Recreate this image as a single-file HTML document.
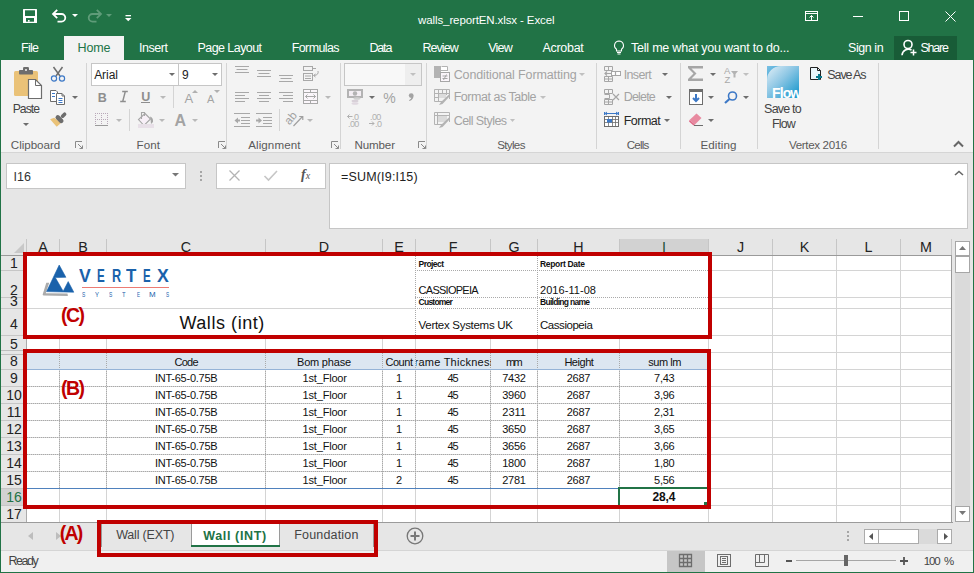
<!DOCTYPE html><html><head><meta charset="utf-8"><style>
*{margin:0;padding:0;box-sizing:border-box}
html,body{width:974px;height:573px;overflow:hidden;background:#e6e6e6;font-family:"Liberation Sans",sans-serif}
.a{position:absolute}
.t{white-space:nowrap;line-height:1}
svg{position:absolute;overflow:visible}
</style></head><body>
<div class="a" style="left:0px;top:0px;width:974px;height:60px;background:#217346"></div>
<svg style="left:23px;top:9px" width="14" height="14" viewBox="0 0 14 14"><rect x="0" y="0" width="14" height="14" rx="0.5" fill="#fff"/><rect x="2" y="1.3" width="10" height="5.7" fill="#217346"/><rect x="3" y="9" width="8" height="3.7" fill="#217346"/><rect x="5" y="11" width="1.6" height="1.7" fill="#fff"/></svg>
<svg style="left:51px;top:8px" width="17" height="15" viewBox="0 0 17 15"><path d="M2.5 6H10.5a3.8 3.8 0 0 1 0 7.6H6.5" fill="none" stroke="#fff" stroke-width="1.8"/><path d="M6.2 1.8L2 6L6.2 10.2" fill="none" stroke="#fff" stroke-width="1.8"/></svg>
<svg style="left:72px;top:14px" width="6" height="3" viewBox="0 0 6 3"><path d="M0 0H6L3 3Z" fill="#fff"/></svg>
<svg style="left:86px;top:8px" width="17" height="15" viewBox="0 0 17 15"><path d="M14.5 6H6.5a3.8 3.8 0 0 0 0 7.6H10.5" fill="none" stroke="#5f9c79" stroke-width="1.8"/><path d="M10.8 1.8L15 6L10.8 10.2" fill="none" stroke="#5f9c79" stroke-width="1.8"/></svg>
<svg style="left:106px;top:14px" width="6" height="3" viewBox="0 0 6 3"><path d="M0 0H6L3 3Z" fill="#5f9c79"/></svg>
<svg style="left:125px;top:15px" width="7" height="7" viewBox="0 0 7 7"><rect x="0.5" y="0" width="5.5" height="1.3" fill="#fff"/><path d="M0 3H6.5L3.25 6.3Z" fill="#fff"/></svg>
<div class="a t" style="left:418.10px;top:14.62px;font-size:11.5px;letter-spacing:-0.112px;color:#ffffff;">walls_reportEN.xlsx - Excel</div>
<svg style="left:805px;top:11px" width="14" height="10" viewBox="0 0 14 10"><rect x="0.5" y="0.5" width="12" height="9" fill="none" stroke="#fff"/><path d="M0.5 2.5H12.5" stroke="#fff"/><path d="M6.5 9V4.5M4.5 6.5L6.5 4.5L8.5 6.5" fill="none" stroke="#fff"/></svg>
<div class="a" style="left:853px;top:16px;width:10px;height:1px;background:#fff"></div>
<svg style="left:899px;top:11px" width="11" height="11" viewBox="0 0 11 11"><rect x="0.5" y="0.5" width="9" height="9" fill="none" stroke="#fff"/></svg>
<svg style="left:945px;top:11px" width="11" height="11" viewBox="0 0 11 11"><path d="M0.5 0.5L10.5 10.5M10.5 0.5L0.5 10.5" stroke="#fff"/></svg>
<div class="a" style="left:64px;top:36px;width:60px;height:24px;background:#f3f3f3"></div>
<div class="a t" style="left:77.50px;top:42.08px;font-size:12.5px;letter-spacing:-0.133px;color:#217346;">Home</div>
<div class="a t" style="left:21.00px;top:42.08px;font-size:12.5px;letter-spacing:-0.700px;color:#ffffff;">File</div>
<div class="a t" style="left:139.00px;top:42.08px;font-size:12.5px;letter-spacing:-0.460px;color:#ffffff;">Insert</div>
<div class="a t" style="left:197.50px;top:42.08px;font-size:12.5px;letter-spacing:-0.560px;color:#ffffff;">Page Layout</div>
<div class="a t" style="left:291.70px;top:42.08px;font-size:12.5px;letter-spacing:-0.600px;color:#ffffff;">Formulas</div>
<div class="a t" style="left:369.40px;top:42.08px;font-size:12.5px;letter-spacing:-1.133px;color:#ffffff;">Data</div>
<div class="a t" style="left:422.40px;top:42.08px;font-size:12.5px;letter-spacing:-0.920px;color:#ffffff;">Review</div>
<div class="a t" style="left:488.20px;top:42.08px;font-size:12.5px;letter-spacing:-0.733px;color:#ffffff;">View</div>
<div class="a t" style="left:542.40px;top:42.08px;font-size:12.5px;letter-spacing:-0.283px;color:#ffffff;">Acrobat</div>
<svg style="left:613px;top:40px" width="12" height="15" viewBox="0 0 12 15"><path d="M6 1a4.5 4.5 0 0 0-2.5 8.2V11h5V9.2A4.5 4.5 0 0 0 6 1z" fill="none" stroke="#fff" stroke-width="1.1"/><path d="M4 12.5h4M4.5 14h3" stroke="#fff" stroke-width="1"/></svg>
<div class="a t" style="left:631.00px;top:42.08px;font-size:12.5px;letter-spacing:-0.214px;color:#ffffff;">Tell me what you want to do...</div>
<div class="a t" style="left:848.00px;top:42.08px;font-size:12.5px;letter-spacing:-0.433px;color:#ffffff;">Sign in</div>
<div class="a" style="left:894px;top:36px;width:63px;height:24px;background:#185c37"></div>
<svg style="left:901px;top:39px" width="17" height="17" viewBox="0 0 17 17"><circle cx="7" cy="5.5" r="4" fill="none" stroke="#fff" stroke-width="1.6"/><path d="M1 16.2a6.5 6.5 0 0 1 9.5-5.2" fill="none" stroke="#fff" stroke-width="1.6"/><path d="M12.5 10.5v6M9.5 13.5h6" stroke="#fff" stroke-width="1.5"/></svg>
<div class="a t" style="left:920.40px;top:42.08px;font-size:12.5px;letter-spacing:-1.200px;color:#ffffff;">Share</div>
<div class="a" style="left:1px;top:60px;width:972px;height:93px;background:#f3f3f3"></div>
<div class="a" style="left:1px;top:152px;width:972px;height:1px;background:#d5d5d5"></div>
<div class="a" style="left:86px;top:63px;width:1px;height:86px;background:#d4d4d4"></div>
<div class="a" style="left:226px;top:63px;width:1px;height:86px;background:#d4d4d4"></div>
<div class="a" style="left:340px;top:63px;width:1px;height:86px;background:#d4d4d4"></div>
<div class="a" style="left:426px;top:63px;width:1px;height:86px;background:#d4d4d4"></div>
<div class="a" style="left:596px;top:63px;width:1px;height:86px;background:#d4d4d4"></div>
<div class="a" style="left:680px;top:63px;width:1px;height:86px;background:#d4d4d4"></div>
<div class="a" style="left:757px;top:63px;width:1px;height:86px;background:#d4d4d4"></div>
<div class="a" style="left:878px;top:63px;width:1px;height:86px;background:#d4d4d4"></div>
<div class="a t" style="left:10.80px;top:138.64px;font-size:11.6px;letter-spacing:-0.025px;color:#5a5a5a;">Clipboard</div>
<div class="a t" style="left:136.60px;top:138.64px;font-size:11.6px;letter-spacing:0.033px;color:#5a5a5a;">Font</div>
<div class="a t" style="left:248.20px;top:138.64px;font-size:11.6px;letter-spacing:0.088px;color:#5a5a5a;">Alignment</div>
<div class="a t" style="left:354.40px;top:138.64px;font-size:11.6px;letter-spacing:-0.120px;color:#5a5a5a;">Number</div>
<div class="a t" style="left:497.20px;top:138.64px;font-size:11.6px;letter-spacing:-0.660px;color:#5a5a5a;">Styles</div>
<div class="a t" style="left:626.70px;top:138.64px;font-size:11.6px;letter-spacing:-0.800px;color:#5a5a5a;">Cells</div>
<div class="a t" style="left:700.40px;top:138.64px;font-size:11.6px;letter-spacing:0.117px;color:#5a5a5a;">Editing</div>
<div class="a t" style="left:789.00px;top:138.64px;font-size:11.6px;letter-spacing:-0.360px;color:#5a5a5a;">Vertex 2016</div>
<svg style="left:75px;top:141px" width="8" height="8" viewBox="0 0 8 8"><path d="M0.5 7V0.5H7" fill="none" stroke="#8a8a8a"/><path d="M3 3L7.5 7.5M7.5 4.5V7.5H4.5" fill="none" stroke="#8a8a8a"/></svg>
<svg style="left:218px;top:141px" width="8" height="8" viewBox="0 0 8 8"><path d="M0.5 7V0.5H7" fill="none" stroke="#8a8a8a"/><path d="M3 3L7.5 7.5M7.5 4.5V7.5H4.5" fill="none" stroke="#8a8a8a"/></svg>
<svg style="left:331px;top:141px" width="8" height="8" viewBox="0 0 8 8"><path d="M0.5 7V0.5H7" fill="none" stroke="#8a8a8a"/><path d="M3 3L7.5 7.5M7.5 4.5V7.5H4.5" fill="none" stroke="#8a8a8a"/></svg>
<svg style="left:418px;top:141px" width="8" height="8" viewBox="0 0 8 8"><path d="M0.5 7V0.5H7" fill="none" stroke="#8a8a8a"/><path d="M3 3L7.5 7.5M7.5 4.5V7.5H4.5" fill="none" stroke="#8a8a8a"/></svg>
<svg style="left:953px;top:140px" width="11" height="8" viewBox="0 0 11 8"><path d="M1 6.5L5.5 2L10 6.5" fill="none" stroke="#666" stroke-width="2"/></svg>
<svg style="left:14px;top:66px" width="30" height="34" viewBox="0 0 30 34"><rect x="0" y="5" width="24" height="25" rx="1.5" fill="#eac278"/><rect x="5" y="4" width="14" height="4.5" rx="0.8" fill="#6d6d6d"/><rect x="9" y="1" width="6" height="4" rx="1.2" fill="#6d6d6d"/><circle cx="12" cy="4" r="1" fill="#f3f3f3"/><path d="M14.5 13.5H21.5L27.5 19.5V32.5H14.5Z" fill="#fff" stroke="#6d6d6d" stroke-width="1.2"/><path d="M21.5 13.5V19.5H27.5" fill="none" stroke="#6d6d6d" stroke-width="1"/></svg>
<div class="a t" style="left:12.70px;top:103.13px;font-size:12.2px;letter-spacing:-0.975px;color:#444;">Paste</div>
<svg style="left:23px;top:123px" width="6" height="3" viewBox="0 0 6 3"><path d="M0 0H6L3 3Z" fill="#6d6d6d"/></svg>
<svg style="left:50px;top:66px" width="16" height="16" viewBox="0 0 16 16"><path d="M3.5 1L10 10M12.5 1L6 10" stroke="#6d6d6d" stroke-width="1.5"/><circle cx="4" cy="12.5" r="2.6" fill="none" stroke="#3c78c6" stroke-width="1.2"/><circle cx="12" cy="12.5" r="2.6" fill="none" stroke="#3c78c6" stroke-width="1.2"/></svg>
<svg style="left:50px;top:90px" width="16" height="15" viewBox="0 0 16 15"><path d="M0.5 0.5H6L7.5 2V11.5H0.5Z" fill="#fff" stroke="#6d6d6d"/><path d="M6.5 3.5H12L14.5 6V14.5H6.5Z" fill="#fff" stroke="#6d6d6d"/><path d="M12 3.5V6H14.5" fill="none" stroke="#6d6d6d"/><path d="M2 3.5H5M2 6.5H5M8.5 8.5H12.5M8.5 10.5H12.5M8.5 12.5H12.5" stroke="#3c78c6"/></svg>
<svg style="left:72px;top:96px" width="6" height="3" viewBox="0 0 6 3"><path d="M0 0H6L3 3Z" fill="#6d6d6d"/></svg>
<svg style="left:40px;top:105px" width="30" height="25" viewBox="0 0 30 25"><path d="M10.1 14.2L14.2 12.7L21 17.9L16.7 21.7Z" fill="#eac278"/><path d="M17.8 12.4L21.2 15.8" stroke="#6d6d6d" stroke-width="4.6" stroke-linecap="round"/><path d="M22.6 11.2L24.6 9.2" stroke="#6d6d6d" stroke-width="3.6" stroke-linecap="round"/></svg>
<div class="a" style="left:91px;top:63px;width:88px;height:23px;background:#fff;border:1px solid #c6c6c6"></div>
<div class="a" style="left:178px;top:63px;width:44px;height:23px;background:#fff;border:1px solid #c6c6c6"></div>
<div class="a t" style="left:94.20px;top:69.00px;font-size:12px;letter-spacing:-0.075px;color:#222;">Arial</div>
<div class="a t" style="left:182.00px;top:69.00px;font-size:12px;letter-spacing:0.000px;color:#222;">9</div>
<svg style="left:169px;top:73px" width="6" height="3" viewBox="0 0 6 3"><path d="M0 0H6L3 3Z" fill="#6d6d6d"/></svg>
<svg style="left:212px;top:73px" width="6" height="3" viewBox="0 0 6 3"><path d="M0 0H6L3 3Z" fill="#6d6d6d"/></svg>
<div class="a t" style="left:97.80px;top:91.88px;font-size:12.5px;letter-spacing:0.000px;color:#8e8e8e;font-weight:bold;">B</div>
<svg style="left:119px;top:91px" width="10" height="11" viewBox="0 0 10 11"><path d="M3.2 0.5H8.8M1.2 10.5H6.8M6.3 0.5L3.7 10.5" stroke="#8e8e8e" stroke-width="1.4" fill="none"/></svg>
<div class="a t" style="left:141.30px;top:91.38px;font-size:12.5px;letter-spacing:0.000px;color:#8e8e8e;font-weight:bold;">U</div>
<div class="a" style="left:141px;top:102px;width:9px;height:1px;background:#8e8e8e"></div>
<svg style="left:160px;top:96px" width="6" height="3" viewBox="0 0 6 3"><path d="M0 0H6L3 3Z" fill="#b9b9b9"/></svg>
<div class="a" style="left:173px;top:86px;width:1px;height:22px;background:#d4d4d4"></div>
<div class="a t" style="left:184.50px;top:92.45px;font-size:13px;letter-spacing:0.000px;color:#a3a3a3;">A</div>
<svg style="left:192px;top:90px" width="6" height="3" viewBox="0 0 6 3"><path d="M0 3H6L3 0Z" fill="#b0b0b0"/></svg>
<div class="a t" style="left:207.00px;top:94.15px;font-size:11px;letter-spacing:0.000px;color:#a3a3a3;">A</div>
<svg style="left:214px;top:90px" width="6" height="3" viewBox="0 0 6 3"><path d="M0 0H6L3 3Z" fill="#b0b0b0"/></svg>
<svg style="left:95px;top:113px" width="13" height="13" viewBox="0 0 13 13"><path d="M0 0.5H13M0 6.5H13M0.5 0V12M6.5 0V12M12.5 0V12" stroke="#b8a8b8" stroke-dasharray="1 1"/><path d="M0 12.5H13" stroke="#9a9a9a"/></svg>
<svg style="left:116px;top:119px" width="6" height="3" viewBox="0 0 6 3"><path d="M0 0H6L3 3Z" fill="#b9b9b9"/></svg>
<div class="a" style="left:129px;top:109px;width:1px;height:22px;background:#d4d4d4"></div>
<svg style="left:138px;top:111px" width="17" height="18" viewBox="0 0 17 18"><path d="M7 2.5L12.5 8L6 14.5L0.5 8.5Z" fill="#f8f0f8" stroke="#a6a6a6" stroke-width="1.1"/><path d="M3.5 8V1.5H6.5V5" fill="none" stroke="#a6a6a6" stroke-width="1.1"/><path d="M12 5.5Q15.5 6.5 15 11L13 13L12.5 8Z" fill="#a6a6a6"/><rect x="0" y="13" width="16" height="4" fill="#e8e0e8"/></svg>
<svg style="left:159px;top:119px" width="6" height="3" viewBox="0 0 6 3"><path d="M0 0H6L3 3Z" fill="#b9b9b9"/></svg>
<div class="a t" style="left:174.40px;top:112.50px;font-size:16px;letter-spacing:0.000px;color:#a3a3a3;font-weight:bold;">A</div>
<svg style="left:192px;top:119px" width="6" height="3" viewBox="0 0 6 3"><path d="M0 0H6L3 3Z" fill="#b9b9b9"/></svg>
<svg style="left:235px;top:66px" width="16" height="14" viewBox="0 0 16 14"><path d="M0 0.5H14" stroke="#a8a8a8"/><path d="M1.5 3.5H12.5" stroke="#a8a8a8"/><path d="M0 6.5H14" stroke="#a8a8a8"/></svg>
<svg style="left:257px;top:70px" width="16" height="14" viewBox="0 0 16 14"><path d="M0 0.5H14" stroke="#a8a8a8"/><path d="M1.5 3.5H12.5" stroke="#a8a8a8"/><path d="M0 6.5H14" stroke="#a8a8a8"/></svg>
<svg style="left:279px;top:75px" width="16" height="14" viewBox="0 0 16 14"><path d="M0 0.5H14" stroke="#a8a8a8"/><path d="M1.5 3.5H12.5" stroke="#a8a8a8"/><path d="M0 6.5H14" stroke="#a8a8a8"/></svg>
<svg style="left:235px;top:92px" width="16" height="14" viewBox="0 0 16 14"><path d="M0 0.5H14" stroke="#a8a8a8"/><path d="M0 3.5H10" stroke="#a8a8a8"/><path d="M0 6.5H14" stroke="#a8a8a8"/><path d="M0 9.5H10" stroke="#a8a8a8"/></svg>
<svg style="left:257px;top:92px" width="16" height="14" viewBox="0 0 16 14"><path d="M0 0.5H14" stroke="#a8a8a8"/><path d="M2 3.5H12" stroke="#a8a8a8"/><path d="M0 6.5H14" stroke="#a8a8a8"/><path d="M2 9.5H12" stroke="#a8a8a8"/></svg>
<svg style="left:279px;top:92px" width="16" height="14" viewBox="0 0 16 14"><path d="M0 0.5H14" stroke="#a8a8a8"/><path d="M4 3.5H14" stroke="#a8a8a8"/><path d="M0 6.5H14" stroke="#a8a8a8"/><path d="M4 9.5H14" stroke="#a8a8a8"/></svg>
<svg style="left:303px;top:66px" width="17" height="15" viewBox="0 0 17 15"><rect x="0.5" y="0.5" width="9" height="4" fill="none" stroke="#a8a8a8"/><path d="M9.5 2.5H13" stroke="#a8a8a8"/><rect x="0.5" y="7.5" width="9" height="7" fill="none" stroke="#a8a8a8"/><path d="M2 10H8M2 12.5H8" stroke="#a8a8a8"/><path d="M15 5Q16 9 11 9.5M12.5 8L10.5 9.5L12.5 11" fill="none" stroke="#a8a8a8"/></svg>
<svg style="left:303px;top:89px" width="16" height="15" viewBox="0 0 16 15"><rect x="0.5" y="0.5" width="14" height="14" fill="#fbf6fb" stroke="#a8a8a8"/><path d="M0.5 3.5H14.5M0.5 11.5H14.5M7.5 0.5V3.5M7.5 11.5V14.5M2.5 7.5H12.5M4.5 5.5L2.5 7.5L4.5 9.5M10.5 5.5L12.5 7.5L10.5 9.5" fill="none" stroke="#a8a8a8"/></svg>
<svg style="left:325px;top:96px" width="6" height="3" viewBox="0 0 6 3"><path d="M0 0H6L3 3Z" fill="#b9b9b9"/></svg>
<svg style="left:234px;top:113px" width="17" height="14" viewBox="0 0 17 14"><path d="M0 0.5H16M7 4.5H16M7 7.5H16M7 10.5H16M0 13.5H16" stroke="#a8a8a8"/><path d="M2 7.5H6" stroke="#a8a8a8" stroke-width="2"/><path d="M4 4.5L0.5 7.5L4 10.5Z" fill="#a8a8a8"/></svg>
<svg style="left:256px;top:113px" width="17" height="14" viewBox="0 0 17 14"><path d="M0 0.5H16M7 4.5H16M7 7.5H16M7 10.5H16M0 13.5H16" stroke="#a8a8a8"/><path d="M0 7.5H4" stroke="#a8a8a8" stroke-width="2"/><path d="M2.5 4.5L6 7.5L2.5 10.5Z" fill="#a8a8a8"/></svg>
<div class="a" style="left:279px;top:109px;width:1px;height:22px;background:#d4d4d4"></div>
<svg style="left:284px;top:110px" width="22" height="18" viewBox="0 0 22 18"><text x="0" y="0" font-size="11.5" fill="#a0a0a0" font-family="Liberation Sans" transform="translate(5.5 15.5) rotate(-50)">ab</text><path d="M9.5 16L18.5 6.5M15.2 6.5H18.8V10" fill="none" stroke="#a0a0a0" stroke-width="1.2"/></svg>
<svg style="left:307px;top:119px" width="6" height="3" viewBox="0 0 6 3"><path d="M0 0H6L3 3Z" fill="#b9b9b9"/></svg>
<div class="a" style="left:344px;top:63px;width:78px;height:23px;background:#f8f8f8;border:1px solid #c6c6c6"></div>
<div class="a" style="left:405px;top:64px;width:16px;height:21px;background:#eeeeee"></div>
<svg style="left:410px;top:73px" width="6" height="3" viewBox="0 0 6 3"><path d="M0 0H6L3 3Z" fill="#c0c0c0"/></svg>
<svg style="left:347px;top:89px" width="16" height="16" viewBox="0 0 16 16"><rect x="0" y="0" width="16" height="9" fill="#b3b3b3"/><rect x="2" y="2" width="12" height="5" fill="#f3eef3"/><circle cx="8" cy="4.5" r="2.2" fill="#b3b3b3"/><ellipse cx="10" cy="9.5" rx="3.5" ry="1.3" fill="#d0d0d0"/><ellipse cx="8" cy="12" rx="3.5" ry="1.3" fill="#d8d0d8"/><ellipse cx="8" cy="14.5" rx="3.5" ry="1.3" fill="#e0d8e0"/></svg>
<svg style="left:369px;top:96px" width="6" height="3" viewBox="0 0 6 3"><path d="M0 0H6L3 3Z" fill="#6d6d6d"/></svg>
<div class="a t" style="left:383.30px;top:91.30px;font-size:14px;letter-spacing:0.000px;color:#a3a3a3;">%</div>
<svg style="left:407px;top:93px" width="7" height="8" viewBox="0 0 7 8"><circle cx="4.2" cy="2.6" r="2.4" fill="#a3a3a3"/><path d="M6.4 3Q6.5 6.5 2.5 8L2 7.3Q4.5 6 4.6 4Z" fill="#a3a3a3"/></svg>
<svg style="left:345px;top:111px" width="42" height="17" viewBox="0 0 42 17"><g font-family="Liberation Sans" font-size="9" fill="#b0b0b0"><text x="7" y="8.5" letter-spacing="-0.6">.0</text><text x="3" y="15.5" letter-spacing="-0.6">.00</text><text x="25" y="8.5" letter-spacing="-0.6">.00</text><text x="30" y="15.5" letter-spacing="-0.6">.0</text></g><path d="M7.5 5.5H2.5M4.5 3.5L2.5 5.5L4.5 7.5M24 12.5H29M27 10.5L29 12.5L27 14.5" fill="none" stroke="#b0b0b0" stroke-width="1"/></svg>
<svg style="left:434px;top:66px" width="16" height="16" viewBox="0 0 16 16"><rect x="0" y="0" width="14" height="12" fill="#fff"/><rect x="0" y="0" width="7" height="12" fill="#b3b3b3"/><path d="M7.5 0.5H13.5V4.5H7.5M0 4.5H14M0 8.5H7" fill="none" stroke="#b3b3b3"/><rect x="6.5" y="6.5" width="9" height="9" fill="#faf5fa" stroke="#a6a6a6"/><path d="M8.5 10H13.5M8.5 12.5H13.5M12.5 8.5L9.5 14" stroke="#a6a6a6"/></svg>
<div class="a t" style="left:453.70px;top:68.58px;font-size:12.5px;letter-spacing:-0.133px;color:#a3a3a3;">Conditional Formatting</div>
<svg style="left:579px;top:73px" width="6" height="3" viewBox="0 0 6 3"><path d="M0 0H6L3 3Z" fill="#c0c0c0"/></svg>
<svg style="left:434px;top:89px" width="16" height="16" viewBox="0 0 16 16"><path d="M0.5 0.5H15.5V10M0.5 0.5V12.5H9M0.5 4.5H15M0.5 8.5H10M4.5 0.5V12.5M8.5 0.5V9M12.5 0.5V6" fill="none" stroke="#b3b3b3"/><rect x="5" y="5" width="7" height="4" fill="#dcdcdc"/><path d="M15.5 5L7 13L5 16L8.5 15L16 7Z" fill="#b3b3b3"/></svg>
<div class="a t" style="left:453.70px;top:91.47px;font-size:12.5px;letter-spacing:-0.471px;color:#a3a3a3;">Format as Table</div>
<svg style="left:540px;top:96px" width="6" height="3" viewBox="0 0 6 3"><path d="M0 0H6L3 3Z" fill="#c0c0c0"/></svg>
<svg style="left:434px;top:112px" width="16" height="16" viewBox="0 0 16 16"><path d="M0.5 0.5H15.5V10M0.5 0.5V12.5H9M0.5 3.5H15M3.5 0.5V12.5" fill="none" stroke="#b3b3b3"/><rect x="4" y="4" width="9" height="6" fill="#dadada"/><path d="M15.5 5L7 13L5 16L8.5 15L16 7Z" fill="#b3b3b3"/></svg>
<div class="a t" style="left:453.70px;top:114.58px;font-size:12.5px;letter-spacing:-0.570px;color:#a3a3a3;">Cell Styles</div>
<svg style="left:510px;top:119px" width="5" height="3" viewBox="0 0 5 3"><path d="M0 0H5L2.5 3Z" fill="#c0c0c0"/></svg>
<svg style="left:604px;top:66px" width="17" height="16" viewBox="0 0 17 16"><path d="M0.5 0.5H8.5V4.5H0.5ZM0.5 10.5H8.5V15.5H0.5ZM4.5 0.5V4.5M4.5 10.5V15.5M0.5 13H8.5" fill="none" stroke="#a6a6a6"/><rect x="7.5" y="5.5" width="9" height="4" fill="#fff" stroke="#a6a6a6"/><path d="M11.5 5.5V9.5M1 7.5H7M3 5.5L1 7.5L3 9.5" fill="none" stroke="#a6a6a6" stroke-width="1.2"/></svg>
<div class="a t" style="left:623.70px;top:68.58px;font-size:12.5px;letter-spacing:-0.640px;color:#a3a3a3;">Insert</div>
<svg style="left:662px;top:73px" width="6" height="3" viewBox="0 0 6 3"><path d="M0 0H6L3 3Z" fill="#6d6d6d"/></svg>
<svg style="left:604px;top:89px" width="17" height="16" viewBox="0 0 17 16"><path d="M0.5 0.5H8.5V4.5H0.5ZM0.5 10.5H8.5V15.5H0.5ZM4.5 0.5V4.5M4.5 10.5V15.5M0.5 13H8.5M0.5 5.5H5.5V9.5H0.5" fill="none" stroke="#a6a6a6"/><path d="M9 5L15 11M15 5L9 11" stroke="#a6a6a6" stroke-width="1.2"/></svg>
<div class="a t" style="left:623.70px;top:91.47px;font-size:12.5px;letter-spacing:-0.800px;color:#a3a3a3;">Delete</div>
<svg style="left:666px;top:96px" width="6" height="3" viewBox="0 0 6 3"><path d="M0 0H6L3 3Z" fill="#6d6d6d"/></svg>
<svg style="left:604px;top:112px" width="16" height="16" viewBox="0 0 16 16"><path d="M0.5 0V3M14.5 0V3M1.5 1.5H13.5M3 0L1 1.5L3 3M12 0L14 1.5L12 3" fill="none" stroke="#3c78c6" stroke-width="1"/><rect x="0.5" y="4.5" width="14" height="10" fill="#fff" stroke="#6d6d6d"/><path d="M0.5 7.5H14.5M0.5 10.5H14.5M4.5 4.5V14.5M8.5 4.5V14.5M11.5 4.5V14.5" stroke="#6d6d6d" stroke-width="0.8"/><rect x="3" y="7" width="5" height="3.5" fill="#3c78c6"/></svg>
<div class="a t" style="left:623.70px;top:114.58px;font-size:12.5px;letter-spacing:-0.520px;color:#262626;">Format</div>
<svg style="left:664px;top:119px" width="6" height="3" viewBox="0 0 6 3"><path d="M0 0H6L3 3Z" fill="#6d6d6d"/></svg>
<svg style="left:688px;top:66px" width="16" height="15" viewBox="0 0 16 15"><path d="M0 0H15V2.5H3.5L8.5 7.5L3.5 12.5H15V15H0V13L5.5 7.5L0 2Z" fill="#a6a6a6"/></svg>
<svg style="left:710px;top:73px" width="6" height="3" viewBox="0 0 6 3"><path d="M0 0H6L3 3Z" fill="#6d6d6d"/></svg>
<div class="a t" style="left:724.00px;top:66.42px;font-size:9.5px;letter-spacing:0.000px;color:#a9a9a9;">A</div>
<div class="a t" style="left:724.50px;top:74.92px;font-size:9.5px;letter-spacing:0.000px;color:#a9a9a9;">Z</div>
<svg style="left:731px;top:71px" width="8" height="7" viewBox="0 0 8 7"><path d="M0 0H7L4.5 3V6.5H2.5V3Z" fill="#b3b3b3"/></svg>
<svg style="left:743px;top:73px" width="6" height="3" viewBox="0 0 6 3"><path d="M0 0H6L3 3Z" fill="#c0c0c0"/></svg>
<svg style="left:689px;top:89px" width="14" height="16" viewBox="0 0 14 16"><rect x="0.5" y="0.5" width="13" height="15" fill="#fff" stroke="#6d6d6d"/><rect x="0" y="0" width="14" height="3" fill="#6d6d6d"/><path d="M7 5V12M4 9L7 12L10 9" fill="none" stroke="#3c78c6" stroke-width="2"/></svg>
<svg style="left:708px;top:96px" width="6" height="3" viewBox="0 0 6 3"><path d="M0 0H6L3 3Z" fill="#6d6d6d"/></svg>
<svg style="left:724px;top:91px" width="14" height="13" viewBox="0 0 14 13"><circle cx="8.5" cy="5" r="4" fill="none" stroke="#3c78c6" stroke-width="1.6"/><path d="M5.5 8L1 12" stroke="#3c78c6" stroke-width="2.2"/></svg>
<svg style="left:743px;top:96px" width="6" height="3" viewBox="0 0 6 3"><path d="M0 0H6L3 3Z" fill="#6d6d6d"/></svg>
<svg style="left:689px;top:113px" width="15" height="13" viewBox="0 0 15 13"><path d="M7.5 0.5L12.5 5L6 11.5L0.5 7Z" fill="#e88aa0"/><path d="M0.5 7L6 11.5L4.5 12.5L0 8.5Z" fill="#e06a88"/><path d="M5 12.5H14" stroke="#6d6d6d" stroke-width="1"/></svg>
<svg style="left:708px;top:119px" width="6" height="3" viewBox="0 0 6 3"><path d="M0 0H6L3 3Z" fill="#6d6d6d"/></svg>
<svg style="left:767px;top:66px;overflow:hidden" width="32" height="32" viewBox="0 0 32 32"><defs><linearGradient id="fg" x1="0" y1="0" x2="1" y2="1"><stop offset="0" stop-color="#e2eff7"/><stop offset="0.45" stop-color="#8cc6e4"/><stop offset="1" stop-color="#0c93ca"/></linearGradient><linearGradient id="fg2" x1="0" y1="0" x2="1" y2="1"><stop offset="0" stop-color="#7cc0e2"/><stop offset="1" stop-color="#2b9fd4"/></linearGradient></defs><rect width="32" height="32" fill="url(#fg)"/><path d="M0 0H14A14 14 0 0 0 0 14Z" fill="url(#fg2)"/><text x="5" y="31.5" font-family="Liberation Sans" font-weight="bold" font-size="14" fill="#fff" letter-spacing="-0.9">Flow</text></svg>
<div class="a t" style="left:764.10px;top:102.67px;font-size:12.5px;letter-spacing:-0.800px;color:#444;">Save to</div>
<div class="a t" style="left:771.90px;top:118.47px;font-size:12.5px;letter-spacing:-0.800px;color:#444;">Flow</div>
<svg style="left:810px;top:67px" width="13" height="14" viewBox="0 0 13 14"><path d="M0.5 0.5H7.5L10.5 3.5V12.5H0.5Z" fill="#eaf6fb" stroke="#222"/><path d="M7.5 0.5V3.5H10.5" fill="none" stroke="#222"/><path d="M9 7V13M6 10H12" stroke="#0b7a8e" stroke-width="2"/></svg>
<div class="a t" style="left:827.30px;top:68.67px;font-size:12.5px;letter-spacing:-1.100px;color:#444;">Save As</div>
<div class="a" style="left:6px;top:163px;width:180px;height:26px;background:#fff;border:1px solid #c6c6c6"></div>
<div class="a t" style="left:13.50px;top:170.88px;font-size:12.5px;letter-spacing:0.050px;color:#333;">I16</div>
<svg style="left:172px;top:173px" width="7" height="4" viewBox="0 0 7 4"><path d="M0 0H7L3.5 3.5Z" fill="#777"/></svg>
<div class="a" style="left:200px;top:171px;width:2px;height:2px;background:#a6a6a6"></div>
<div class="a" style="left:200px;top:175px;width:2px;height:2px;background:#a6a6a6"></div>
<div class="a" style="left:200px;top:179px;width:2px;height:2px;background:#a6a6a6"></div>
<div class="a" style="left:216px;top:163px;width:110px;height:26px;background:#fff;border:1px solid #c6c6c6"></div>
<svg style="left:229px;top:170px" width="11" height="11" viewBox="0 0 11 11"><path d="M0.5 0.5L10.5 10.5M10.5 0.5L0.5 10.5" stroke="#b3b3b3" stroke-width="1.3"/></svg>
<svg style="left:264px;top:170px" width="14" height="11" viewBox="0 0 14 11"><path d="M0.5 6L4.5 10L13 1" fill="none" stroke="#c6c6c6" stroke-width="1.6"/></svg>
<div class="a t" style="left:301px;top:168px;font-family:'Liberation Serif';font-style:italic;font-weight:bold;font-size:14px;color:#555">f<span style="font-size:10px;font-weight:normal">x</span></div>
<div class="a" style="left:329px;top:163px;width:639px;height:66px;background:#fff;border:1px solid #c6c6c6"></div>
<div class="a t" style="left:341.00px;top:170.88px;font-size:12.5px;letter-spacing:0.173px;color:#222;">=SUM(I9:I15)</div>
<svg style="left:954px;top:170px" width="10" height="6" viewBox="0 0 10 6"><path d="M1 5L5 1.5L9 5" fill="none" stroke="#666" stroke-width="1.6"/></svg>
<div class="a" style="left:1px;top:239px;width:951px;height:16px;background:#e6e6e6"></div>
<div class="a" style="left:619px;top:239px;width:90px;height:16px;background:#d2d2d2"></div>
<svg style="left:14px;top:243px" width="10" height="10" viewBox="0 0 10 10"><path d="M10 0V10H0Z" fill="#c8c8c8"/></svg>
<div class="a" style="left:26px;top:239px;width:1px;height:16px;background:#c6c6c6"></div>
<div class="a" style="left:59px;top:239px;width:1px;height:16px;background:#c6c6c6"></div>
<div class="a" style="left:106px;top:239px;width:1px;height:16px;background:#c6c6c6"></div>
<div class="a" style="left:265px;top:239px;width:1px;height:16px;background:#c6c6c6"></div>
<div class="a" style="left:382px;top:239px;width:1px;height:16px;background:#c6c6c6"></div>
<div class="a" style="left:415px;top:239px;width:1px;height:16px;background:#c6c6c6"></div>
<div class="a" style="left:490px;top:239px;width:1px;height:16px;background:#c6c6c6"></div>
<div class="a" style="left:537px;top:239px;width:1px;height:16px;background:#c6c6c6"></div>
<div class="a" style="left:619px;top:239px;width:1px;height:16px;background:#c6c6c6"></div>
<div class="a" style="left:708px;top:239px;width:1px;height:16px;background:#c6c6c6"></div>
<div class="a" style="left:772px;top:239px;width:1px;height:16px;background:#c6c6c6"></div>
<div class="a" style="left:836px;top:239px;width:1px;height:16px;background:#c6c6c6"></div>
<div class="a" style="left:900px;top:239px;width:1px;height:16px;background:#c6c6c6"></div>
<div class="a" style="left:951px;top:239px;width:1px;height:16px;background:#c6c6c6"></div>
<div class="a" style="left:1px;top:255px;width:951px;height:1px;background:#9a9a9a"></div>
<div class="a t" style="left:38.20px;top:240.34px;font-size:14.3px;letter-spacing:0.000px;color:#222;">A</div>
<div class="a t" style="left:78.25px;top:240.34px;font-size:14.3px;letter-spacing:0.000px;color:#222;">B</div>
<div class="a t" style="left:180.85px;top:240.34px;font-size:14.3px;letter-spacing:0.000px;color:#222;">C</div>
<div class="a t" style="left:318.85px;top:240.34px;font-size:14.3px;letter-spacing:0.000px;color:#222;">D</div>
<div class="a t" style="left:394.25px;top:240.34px;font-size:14.3px;letter-spacing:0.000px;color:#222;">E</div>
<div class="a t" style="left:448.65px;top:240.34px;font-size:14.3px;letter-spacing:0.000px;color:#222;">F</div>
<div class="a t" style="left:508.45px;top:240.34px;font-size:14.3px;letter-spacing:0.000px;color:#222;">G</div>
<div class="a t" style="left:573.35px;top:240.34px;font-size:14.3px;letter-spacing:0.000px;color:#222;">H</div>
<div class="a t" style="left:662.00px;top:240.34px;font-size:14.3px;letter-spacing:0.000px;color:#1d4f3a;">I</div>
<div class="a t" style="left:736.90px;top:240.34px;font-size:14.3px;letter-spacing:0.000px;color:#222;">J</div>
<div class="a t" style="left:799.75px;top:240.34px;font-size:14.3px;letter-spacing:0.000px;color:#222;">K</div>
<div class="a t" style="left:864.50px;top:240.34px;font-size:14.3px;letter-spacing:0.000px;color:#222;">L</div>
<div class="a t" style="left:920.05px;top:240.34px;font-size:14.3px;letter-spacing:0.000px;color:#222;">M</div>
<div class="a" style="left:1px;top:256px;width:25px;height:266px;background:#e6e6e6"></div>
<div class="a" style="left:1px;top:488px;width:25px;height:17px;background:#d2d2d2"></div>
<div class="a" style="left:26px;top:256px;width:1px;height:266px;background:#ababab"></div>
<div class="a" style="left:1px;top:270px;width:25px;height:1px;background:#c6c6c6"></div>
<div class="a t" style="left:10.10px;top:255.60px;font-size:14px;letter-spacing:0.000px;color:#222;">1</div>
<div class="a" style="left:1px;top:297px;width:25px;height:1px;background:#c6c6c6"></div>
<div class="a t" style="left:10.10px;top:282.60px;font-size:14px;letter-spacing:0.000px;color:#222;">2</div>
<div class="a" style="left:1px;top:308px;width:25px;height:1px;background:#c6c6c6"></div>
<div class="a t" style="left:10.10px;top:293.90px;font-size:14px;letter-spacing:0.000px;color:#222;">3</div>
<div class="a" style="left:1px;top:335px;width:25px;height:1px;background:#c6c6c6"></div>
<div class="a t" style="left:10.10px;top:317.30px;font-size:14px;letter-spacing:0.000px;color:#222;">4</div>
<div class="a t" style="left:10.10px;top:337.10px;font-size:14px;letter-spacing:0.000px;color:#222;">5</div>
<div class="a" style="left:1px;top:369px;width:25px;height:1px;background:#c6c6c6"></div>
<div class="a t" style="left:10.10px;top:354.00px;font-size:14px;letter-spacing:0.000px;color:#222;">8</div>
<div class="a" style="left:1px;top:386px;width:25px;height:1px;background:#c6c6c6"></div>
<div class="a t" style="left:10.10px;top:370.70px;font-size:14px;letter-spacing:0.000px;color:#222;">9</div>
<div class="a" style="left:1px;top:403px;width:25px;height:1px;background:#c6c6c6"></div>
<div class="a t" style="left:6.20px;top:387.70px;font-size:14px;letter-spacing:0.000px;color:#222;">10</div>
<div class="a" style="left:1px;top:420px;width:25px;height:1px;background:#c6c6c6"></div>
<div class="a t" style="left:6.75px;top:404.70px;font-size:14px;letter-spacing:0.000px;color:#222;">11</div>
<div class="a" style="left:1px;top:437px;width:25px;height:1px;background:#c6c6c6"></div>
<div class="a t" style="left:6.20px;top:421.70px;font-size:14px;letter-spacing:0.000px;color:#222;">12</div>
<div class="a" style="left:1px;top:454px;width:25px;height:1px;background:#c6c6c6"></div>
<div class="a t" style="left:6.20px;top:438.70px;font-size:14px;letter-spacing:0.000px;color:#222;">13</div>
<div class="a" style="left:1px;top:471px;width:25px;height:1px;background:#c6c6c6"></div>
<div class="a t" style="left:6.20px;top:455.70px;font-size:14px;letter-spacing:0.000px;color:#222;">14</div>
<div class="a" style="left:1px;top:488px;width:25px;height:1px;background:#c6c6c6"></div>
<div class="a t" style="left:6.20px;top:472.70px;font-size:14px;letter-spacing:0.000px;color:#222;">15</div>
<div class="a" style="left:1px;top:505px;width:25px;height:1px;background:#c6c6c6"></div>
<div class="a t" style="left:6.20px;top:489.70px;font-size:14px;letter-spacing:0.000px;color:#217346;">16</div>
<div class="a" style="left:1px;top:522px;width:25px;height:1px;background:#c6c6c6"></div>
<div class="a t" style="left:6.20px;top:506.70px;font-size:14px;letter-spacing:0.000px;color:#222;">17</div>
<div class="a" style="left:1px;top:350px;width:25px;height:1px;background:#bdbdbd"></div>
<div class="a" style="left:1px;top:354px;width:25px;height:1px;background:#bdbdbd"></div>
<div class="a" style="left:27px;top:256px;width:924px;height:266px;background:#fff"></div>
<div class="a" style="left:59px;top:256px;width:1px;height:266px;background:#d4d4d4"></div>
<div class="a" style="left:106px;top:256px;width:1px;height:266px;background:#d4d4d4"></div>
<div class="a" style="left:265px;top:256px;width:1px;height:266px;background:#d4d4d4"></div>
<div class="a" style="left:382px;top:256px;width:1px;height:266px;background:#d4d4d4"></div>
<div class="a" style="left:415px;top:256px;width:1px;height:266px;background:#d4d4d4"></div>
<div class="a" style="left:490px;top:256px;width:1px;height:266px;background:#d4d4d4"></div>
<div class="a" style="left:537px;top:256px;width:1px;height:266px;background:#d4d4d4"></div>
<div class="a" style="left:619px;top:256px;width:1px;height:266px;background:#d4d4d4"></div>
<div class="a" style="left:708px;top:256px;width:1px;height:266px;background:#d4d4d4"></div>
<div class="a" style="left:772px;top:256px;width:1px;height:266px;background:#d4d4d4"></div>
<div class="a" style="left:836px;top:256px;width:1px;height:266px;background:#d4d4d4"></div>
<div class="a" style="left:900px;top:256px;width:1px;height:266px;background:#d4d4d4"></div>
<div class="a" style="left:27px;top:270px;width:924px;height:1px;background:#d4d4d4"></div>
<div class="a" style="left:27px;top:297px;width:924px;height:1px;background:#d4d4d4"></div>
<div class="a" style="left:27px;top:308px;width:924px;height:1px;background:#d4d4d4"></div>
<div class="a" style="left:27px;top:335px;width:924px;height:1px;background:#d4d4d4"></div>
<div class="a" style="left:27px;top:352px;width:924px;height:1px;background:#d4d4d4"></div>
<div class="a" style="left:27px;top:369px;width:924px;height:1px;background:#d4d4d4"></div>
<div class="a" style="left:27px;top:386px;width:924px;height:1px;background:#d4d4d4"></div>
<div class="a" style="left:27px;top:403px;width:924px;height:1px;background:#d4d4d4"></div>
<div class="a" style="left:27px;top:420px;width:924px;height:1px;background:#d4d4d4"></div>
<div class="a" style="left:27px;top:437px;width:924px;height:1px;background:#d4d4d4"></div>
<div class="a" style="left:27px;top:454px;width:924px;height:1px;background:#d4d4d4"></div>
<div class="a" style="left:27px;top:471px;width:924px;height:1px;background:#d4d4d4"></div>
<div class="a" style="left:27px;top:488px;width:924px;height:1px;background:#d4d4d4"></div>
<div class="a" style="left:27px;top:505px;width:924px;height:1px;background:#d4d4d4"></div>
<div class="a" style="left:27px;top:522px;width:924px;height:1px;background:#d4d4d4"></div>
<div class="a" style="left:951px;top:255px;width:1px;height:267px;background:#9a9a9a"></div>
<div class="a" style="left:27px;top:256px;width:681px;height:79px;background:#fff"></div>
<div class="a" style="left:27px;top:308px;width:388px;height:1px;background:#d4d4d4"></div>
<div class="a" style="left:415px;top:270px;width:293px;height:1px;background:repeating-linear-gradient(90deg,#a9a9a9 0 1px,transparent 1px 2px)"></div>
<div class="a" style="left:415px;top:297px;width:293px;height:1px;background:repeating-linear-gradient(90deg,#a9a9a9 0 1px,transparent 1px 2px)"></div>
<div class="a" style="left:415px;top:308px;width:293px;height:1px;background:repeating-linear-gradient(90deg,#a9a9a9 0 1px,transparent 1px 2px)"></div>
<div class="a" style="left:415px;top:256px;width:1px;height:79px;background:repeating-linear-gradient(180deg,#a9a9a9 0 1px,transparent 1px 2px)"></div>
<div class="a" style="left:537px;top:256px;width:1px;height:79px;background:repeating-linear-gradient(180deg,#a9a9a9 0 1px,transparent 1px 2px)"></div>
<div class="a" style="left:27px;top:353px;width:681px;height:16px;background:#dce6f1"></div>
<div class="a" style="left:59px;top:353px;width:1px;height:135px;background:repeating-linear-gradient(180deg,#a9a9a9 0 1px,transparent 1px 2px)"></div>
<div class="a" style="left:106px;top:353px;width:1px;height:135px;background:repeating-linear-gradient(180deg,#a9a9a9 0 1px,transparent 1px 2px)"></div>
<div class="a" style="left:265px;top:353px;width:1px;height:135px;background:repeating-linear-gradient(180deg,#a9a9a9 0 1px,transparent 1px 2px)"></div>
<div class="a" style="left:382px;top:353px;width:1px;height:135px;background:repeating-linear-gradient(180deg,#a9a9a9 0 1px,transparent 1px 2px)"></div>
<div class="a" style="left:415px;top:353px;width:1px;height:135px;background:repeating-linear-gradient(180deg,#a9a9a9 0 1px,transparent 1px 2px)"></div>
<div class="a" style="left:490px;top:353px;width:1px;height:135px;background:repeating-linear-gradient(180deg,#a9a9a9 0 1px,transparent 1px 2px)"></div>
<div class="a" style="left:537px;top:353px;width:1px;height:135px;background:repeating-linear-gradient(180deg,#a9a9a9 0 1px,transparent 1px 2px)"></div>
<div class="a" style="left:619px;top:353px;width:1px;height:135px;background:repeating-linear-gradient(180deg,#a9a9a9 0 1px,transparent 1px 2px)"></div>
<div class="a" style="left:27px;top:386px;width:681px;height:1px;background:repeating-linear-gradient(90deg,#a9a9a9 0 1px,transparent 1px 2px)"></div>
<div class="a" style="left:27px;top:403px;width:681px;height:1px;background:repeating-linear-gradient(90deg,#a9a9a9 0 1px,transparent 1px 2px)"></div>
<div class="a" style="left:27px;top:420px;width:681px;height:1px;background:repeating-linear-gradient(90deg,#a9a9a9 0 1px,transparent 1px 2px)"></div>
<div class="a" style="left:27px;top:437px;width:681px;height:1px;background:repeating-linear-gradient(90deg,#a9a9a9 0 1px,transparent 1px 2px)"></div>
<div class="a" style="left:27px;top:454px;width:681px;height:1px;background:repeating-linear-gradient(90deg,#a9a9a9 0 1px,transparent 1px 2px)"></div>
<div class="a" style="left:27px;top:471px;width:681px;height:1px;background:repeating-linear-gradient(90deg,#a9a9a9 0 1px,transparent 1px 2px)"></div>
<div class="a" style="left:27px;top:369px;width:681px;height:1px;background:#95b3d7"></div>
<div class="a" style="left:27px;top:488px;width:681px;height:1px;background:#4f81bd"></div>
<div class="a t" style="left:174.50px;top:357.15px;font-size:11px;letter-spacing:-0.733px;color:#111;">Code</div>
<div class="a t" style="left:297.00px;top:357.15px;font-size:11px;letter-spacing:-0.200px;color:#111;">Bom phase</div>
<div class="a t" style="left:385.50px;top:357.15px;font-size:11px;letter-spacing:-0.475px;color:#111;">Count</div>
<div class="a t" style="left:506.00px;top:357.15px;font-size:11px;letter-spacing:-1.700px;color:#111;">mm</div>
<div class="a t" style="left:564.40px;top:357.15px;font-size:11px;letter-spacing:-0.460px;color:#111;">Height</div>
<div class="a t" style="left:648.20px;top:357.15px;font-size:11px;letter-spacing:-0.460px;color:#111;">sum lm</div>
<div class="a" style="left:416px;top:353px;width:75px;height:16px;overflow:hidden"><div class="a t" style="left:-8.5px;top:3.65px;font-size:11px;letter-spacing:0.25px;color:#111">Frame Thickness</div></div>
<div class="a t" style="left:155.00px;top:373.15px;font-size:11px;letter-spacing:-0.255px;color:#111;">INT-65-0.75B</div>
<div class="a t" style="left:302.60px;top:373.15px;font-size:11px;letter-spacing:-0.188px;color:#111;">1st_Floor</div>
<div class="a t" style="left:396.00px;top:373.15px;font-size:11px;letter-spacing:0.000px;color:#111;">1</div>
<div class="a t" style="left:447.50px;top:373.15px;font-size:11px;letter-spacing:-1.100px;color:#111;">45</div>
<div class="a t" style="left:502.30px;top:373.15px;font-size:11px;letter-spacing:-0.300px;color:#111;">7432</div>
<div class="a t" style="left:566.70px;top:373.15px;font-size:11px;letter-spacing:-0.267px;color:#111;">2687</div>
<div class="a t" style="left:654.10px;top:373.15px;font-size:11px;letter-spacing:-0.267px;color:#111;">7,43</div>
<div class="a t" style="left:155.00px;top:390.15px;font-size:11px;letter-spacing:-0.255px;color:#111;">INT-65-0.75B</div>
<div class="a t" style="left:302.60px;top:390.15px;font-size:11px;letter-spacing:-0.188px;color:#111;">1st_Floor</div>
<div class="a t" style="left:396.00px;top:390.15px;font-size:11px;letter-spacing:0.000px;color:#111;">1</div>
<div class="a t" style="left:447.50px;top:390.15px;font-size:11px;letter-spacing:-1.100px;color:#111;">45</div>
<div class="a t" style="left:502.30px;top:390.15px;font-size:11px;letter-spacing:-0.300px;color:#111;">3960</div>
<div class="a t" style="left:566.70px;top:390.15px;font-size:11px;letter-spacing:-0.267px;color:#111;">2687</div>
<div class="a t" style="left:654.10px;top:390.15px;font-size:11px;letter-spacing:-0.267px;color:#111;">3,96</div>
<div class="a t" style="left:155.00px;top:407.15px;font-size:11px;letter-spacing:-0.255px;color:#111;">INT-65-0.75B</div>
<div class="a t" style="left:302.60px;top:407.15px;font-size:11px;letter-spacing:-0.188px;color:#111;">1st_Floor</div>
<div class="a t" style="left:396.00px;top:407.15px;font-size:11px;letter-spacing:0.000px;color:#111;">1</div>
<div class="a t" style="left:447.50px;top:407.15px;font-size:11px;letter-spacing:-1.100px;color:#111;">45</div>
<div class="a t" style="left:502.30px;top:407.15px;font-size:11px;letter-spacing:-0.033px;color:#111;">2311</div>
<div class="a t" style="left:566.70px;top:407.15px;font-size:11px;letter-spacing:-0.267px;color:#111;">2687</div>
<div class="a t" style="left:654.10px;top:407.15px;font-size:11px;letter-spacing:-0.267px;color:#111;">2,31</div>
<div class="a t" style="left:155.00px;top:424.15px;font-size:11px;letter-spacing:-0.255px;color:#111;">INT-65-0.75B</div>
<div class="a t" style="left:302.60px;top:424.15px;font-size:11px;letter-spacing:-0.188px;color:#111;">1st_Floor</div>
<div class="a t" style="left:396.00px;top:424.15px;font-size:11px;letter-spacing:0.000px;color:#111;">1</div>
<div class="a t" style="left:447.50px;top:424.15px;font-size:11px;letter-spacing:-1.100px;color:#111;">45</div>
<div class="a t" style="left:502.30px;top:424.15px;font-size:11px;letter-spacing:-0.300px;color:#111;">3650</div>
<div class="a t" style="left:566.70px;top:424.15px;font-size:11px;letter-spacing:-0.267px;color:#111;">2687</div>
<div class="a t" style="left:654.10px;top:424.15px;font-size:11px;letter-spacing:-0.267px;color:#111;">3,65</div>
<div class="a t" style="left:155.00px;top:441.15px;font-size:11px;letter-spacing:-0.255px;color:#111;">INT-65-0.75B</div>
<div class="a t" style="left:302.60px;top:441.15px;font-size:11px;letter-spacing:-0.188px;color:#111;">1st_Floor</div>
<div class="a t" style="left:396.00px;top:441.15px;font-size:11px;letter-spacing:0.000px;color:#111;">1</div>
<div class="a t" style="left:447.50px;top:441.15px;font-size:11px;letter-spacing:-1.100px;color:#111;">45</div>
<div class="a t" style="left:502.30px;top:441.15px;font-size:11px;letter-spacing:-0.300px;color:#111;">3656</div>
<div class="a t" style="left:566.70px;top:441.15px;font-size:11px;letter-spacing:-0.267px;color:#111;">2687</div>
<div class="a t" style="left:654.10px;top:441.15px;font-size:11px;letter-spacing:-0.267px;color:#111;">3,66</div>
<div class="a t" style="left:155.00px;top:458.15px;font-size:11px;letter-spacing:-0.255px;color:#111;">INT-65-0.75B</div>
<div class="a t" style="left:302.60px;top:458.15px;font-size:11px;letter-spacing:-0.188px;color:#111;">1st_Floor</div>
<div class="a t" style="left:396.00px;top:458.15px;font-size:11px;letter-spacing:0.000px;color:#111;">1</div>
<div class="a t" style="left:447.50px;top:458.15px;font-size:11px;letter-spacing:-1.100px;color:#111;">45</div>
<div class="a t" style="left:502.30px;top:458.15px;font-size:11px;letter-spacing:-0.300px;color:#111;">1800</div>
<div class="a t" style="left:566.70px;top:458.15px;font-size:11px;letter-spacing:-0.267px;color:#111;">2687</div>
<div class="a t" style="left:654.10px;top:458.15px;font-size:11px;letter-spacing:-0.267px;color:#111;">1,80</div>
<div class="a t" style="left:155.00px;top:475.15px;font-size:11px;letter-spacing:-0.255px;color:#111;">INT-65-0.75B</div>
<div class="a t" style="left:302.60px;top:475.15px;font-size:11px;letter-spacing:-0.188px;color:#111;">1st_Floor</div>
<div class="a t" style="left:396.00px;top:475.15px;font-size:11px;letter-spacing:0.000px;color:#111;">2</div>
<div class="a t" style="left:447.50px;top:475.15px;font-size:11px;letter-spacing:-1.100px;color:#111;">45</div>
<div class="a t" style="left:502.30px;top:475.15px;font-size:11px;letter-spacing:-0.300px;color:#111;">2781</div>
<div class="a t" style="left:566.70px;top:475.15px;font-size:11px;letter-spacing:-0.267px;color:#111;">2687</div>
<div class="a t" style="left:654.10px;top:475.15px;font-size:11px;letter-spacing:-0.267px;color:#111;">5,56</div>
<div class="a t" style="left:652.50px;top:491.00px;font-size:12px;letter-spacing:-0.167px;color:#111;font-weight:bold;">28,4</div>
<div class="a" style="left:618px;top:487px;width:91px;height:2px;background:#217346"></div>
<div class="a" style="left:618px;top:487px;width:2px;height:19px;background:#217346"></div>
<div class="a" style="left:704px;top:502px;width:3px;height:3px;background:#217346"></div>
<div class="a t" style="left:418.60px;top:260.27px;font-size:8.5px;letter-spacing:-0.567px;color:#111;font-weight:bold;">Project</div>
<div class="a t" style="left:540.00px;top:260.27px;font-size:8.5px;letter-spacing:-0.320px;color:#111;font-weight:bold;">Report Date</div>
<div class="a t" style="left:418.60px;top:285.05px;font-size:11px;letter-spacing:-0.744px;color:#111;">CASSIOPEIA</div>
<div class="a t" style="left:540.00px;top:285.05px;font-size:11px;letter-spacing:0.056px;color:#111;">2016-11-08</div>
<div class="a t" style="left:418.60px;top:297.97px;font-size:8.5px;letter-spacing:-0.771px;color:#111;font-weight:bold;">Customer</div>
<div class="a t" style="left:540.00px;top:297.97px;font-size:8.5px;letter-spacing:-0.717px;color:#111;font-weight:bold;">Building name</div>
<div class="a t" style="left:418.60px;top:319.53px;font-size:11.5px;letter-spacing:-0.294px;color:#111;">Vertex Systems UK</div>
<div class="a t" style="left:540.00px;top:319.53px;font-size:11.5px;letter-spacing:-0.456px;color:#111;">Cassiopeia</div>
<div class="a t" style="left:179.40px;top:313.60px;font-size:18px;letter-spacing:0.560px;color:#111;">Walls (int)</div>
<svg style="left:40px;top:262px" width="40" height="40" viewBox="0 0 40 40"><path d="M6.3 20.8H9.2L5.8 31.2L27.5 31.6L27.9 34L3.6 33.6Q2.2 33.4 2.8 32Z" fill="#ababab"/><path d="M19.2 3L25.9 15.3L15.3 15.6L23.2 29.2L28.2 19.6L33.8 30.2L6.6 29.6Z" fill="#1a62ab" stroke="#1a62ab" stroke-width="0.6" stroke-linejoin="round"/></svg>
<div class="a t" style="left:78.60px;top:266.73px;font-size:18.55px;color:#1a62ab;font-weight:bold;transform:scaleX(0.952);transform-origin:0 0">V</div>
<div class="a t" style="left:97.00px;top:266.73px;font-size:18.55px;color:#1a62ab;font-weight:bold;transform:scaleX(0.629);transform-origin:0 0">E</div>
<div class="a t" style="left:112.00px;top:266.73px;font-size:18.55px;color:#1a62ab;font-weight:bold;transform:scaleX(0.687);transform-origin:0 0">R</div>
<div class="a t" style="left:126.30px;top:266.73px;font-size:18.55px;color:#1a62ab;font-weight:bold;transform:scaleX(0.912);transform-origin:0 0">T</div>
<div class="a t" style="left:142.80px;top:266.73px;font-size:18.55px;color:#1a62ab;font-weight:bold;transform:scaleX(0.621);transform-origin:0 0">E</div>
<div class="a t" style="left:156.60px;top:266.73px;font-size:18.55px;color:#1a62ab;font-weight:bold;transform:scaleX(0.952);transform-origin:0 0">X</div>
<div class="a" style="left:82px;top:287px;width:87px;height:1px;background:#ec7b73"></div>
<div class="a t" style="left:82.00px;top:290.62px;font-size:7.39px;color:#1a62ab;transform:scaleX(0.673);transform-origin:0 0">S</div>
<div class="a t" style="left:95.00px;top:290.62px;font-size:7.39px;color:#1a62ab;transform:scaleX(0.816);transform-origin:0 0">Y</div>
<div class="a t" style="left:109.40px;top:290.62px;font-size:7.39px;color:#1a62ab;transform:scaleX(0.673);transform-origin:0 0">S</div>
<div class="a t" style="left:122.20px;top:290.62px;font-size:7.39px;color:#1a62ab;transform:scaleX(0.800);transform-origin:0 0">T</div>
<div class="a t" style="left:136.60px;top:290.62px;font-size:7.39px;color:#1a62ab;transform:scaleX(0.612);transform-origin:0 0">E</div>
<div class="a t" style="left:149.40px;top:290.62px;font-size:7.39px;color:#1a62ab;transform:scaleX(1.081);transform-origin:0 0">M</div>
<div class="a t" style="left:165.90px;top:290.62px;font-size:7.39px;color:#1a62ab;transform:scaleX(0.633);transform-origin:0 0">S</div>
<div class="a t" style="left:61.00px;top:305.62px;font-size:19.5px;letter-spacing:-1.500px;color:#c00000;font-weight:bold;">(C)</div>
<div class="a t" style="left:61.00px;top:378.93px;font-size:19.5px;letter-spacing:-1.500px;color:#c00000;font-weight:bold;">(B)</div>
<div class="a" style="left:23px;top:252px;width:689px;height:87px;border:4px solid #c00000"></div>
<div class="a" style="left:23px;top:349px;width:688px;height:160px;border:4px solid #c00000"></div>
<div class="a" style="left:952px;top:239px;width:21px;height:284px;background:#e6e6e6"></div>
<div class="a" style="left:955px;top:256px;width:15px;height:250px;background:#dadada"></div>
<div class="a" style="left:955px;top:241px;width:15px;height:15px;background:#fff;border:1px solid #a6a6a6"></div>
<svg style="left:959px;top:246px" width="7" height="4" viewBox="0 0 7 4"><path d="M0 4H7L3.5 0Z" fill="#777"/></svg>
<div class="a" style="left:955px;top:256px;width:15px;height:17px;background:#fff;border:1px solid #a6a6a6"></div>
<div class="a" style="left:955px;top:506px;width:15px;height:16px;background:#fff;border:1px solid #a6a6a6"></div>
<svg style="left:959px;top:511px" width="7" height="4" viewBox="0 0 7 4"><path d="M0 0H7L3.5 4Z" fill="#777"/></svg>
<div class="a" style="left:1px;top:522px;width:952px;height:1px;background:#9b9b9b"></div>
<div class="a" style="left:1px;top:523px;width:972px;height:27px;background:#e6e6e6"></div>
<svg style="left:28px;top:532px" width="5" height="8" viewBox="0 0 5 8"><path d="M5 0V8L0 4Z" fill="#bdbdbd"/></svg>
<div class="a t" style="left:116.20px;top:529.17px;font-size:12.5px;letter-spacing:-0.178px;color:#444;">Wall (EXT)</div>
<div class="a" style="left:101px;top:523px;width:1px;height:24px;background:#9a9a9a"></div>
<div class="a" style="left:191px;top:523px;width:89px;height:24px;background:#fff;border-left:1px solid #9a9a9a;border-right:1px solid #9a9a9a"></div>
<div class="a" style="left:191px;top:545px;width:89px;height:2px;background:#217346"></div>
<div class="a t" style="left:203.30px;top:529.77px;font-size:12.5px;letter-spacing:0.622px;color:#217346;font-weight:bold;">Wall (INT)</div>
<div class="a t" style="left:294.30px;top:529.17px;font-size:12.5px;letter-spacing:0.167px;color:#444;">Foundation</div>
<div class="a" style="left:373px;top:523px;width:1px;height:24px;background:#9a9a9a"></div>
<svg style="left:406px;top:527px" width="18" height="18" viewBox="0 0 18 18"><circle cx="9" cy="9" r="7.8" fill="none" stroke="#777" stroke-width="1.3"/><path d="M9 4.5V13.5M4.5 9H13.5" stroke="#777" stroke-width="2"/></svg>
<div class="a" style="left:61px;top:520px;width:4px;height:1px;background:transparent"></div>
<svg style="left:56px;top:532px" width="5" height="8" viewBox="0 0 5 8"><path d="M0 0V8L5 4Z" fill="#bdbdbd"/></svg>
<div class="a" style="left:847px;top:531px;width:2px;height:2px;background:#a6a6a6"></div>
<div class="a" style="left:847px;top:535px;width:2px;height:2px;background:#a6a6a6"></div>
<div class="a" style="left:847px;top:539px;width:2px;height:2px;background:#a6a6a6"></div>
<div class="a" style="left:864px;top:529px;width:88px;height:15px;background:#dadada"></div>
<div class="a" style="left:864px;top:529px;width:15px;height:15px;background:#fff;border:1px solid #ababab"></div>
<svg style="left:869px;top:533px" width="4" height="7" viewBox="0 0 4 7"><path d="M4 0V7L0 3.5Z" fill="#555"/></svg>
<div class="a" style="left:878px;top:529px;width:41px;height:15px;background:#fff;border:1px solid #ababab"></div>
<div class="a" style="left:937px;top:529px;width:15px;height:15px;background:#fff;border:1px solid #ababab"></div>
<svg style="left:944px;top:533px" width="4" height="7" viewBox="0 0 4 7"><path d="M0 0V7L4 3.5Z" fill="#555"/></svg>
<div class="a" style="left:1px;top:550px;width:972px;height:22px;background:#f0f0f0"></div>
<div class="a" style="left:1px;top:550px;width:972px;height:1px;background:#d5d5d5"></div>
<div class="a t" style="left:8.40px;top:555.17px;font-size:12.5px;letter-spacing:-1.450px;color:#444;">Ready</div>
<div class="a" style="left:667px;top:551px;width:38px;height:21px;background:#c6c6c6"></div>
<svg style="left:679px;top:554px" width="13" height="13" viewBox="0 0 13 13"><path d="M0.5 0.5H12.5V12.5H0.5Z M4.5 0.5V12.5M8.5 0.5V12.5M0.5 4.5H12.5M0.5 8.5H12.5" fill="none" stroke="#6d6d6d" stroke-width="1.3"/></svg>
<svg style="left:717px;top:554px" width="14" height="13" viewBox="0 0 14 13"><rect x="0.5" y="0.5" width="13" height="12" fill="none" stroke="#6d6d6d"/><rect x="3.5" y="2.5" width="7" height="8" fill="none" stroke="#6d6d6d"/><path d="M5 4.5H9M5 6.5H9M5 8.5H9" stroke="#6d6d6d"/></svg>
<svg style="left:755px;top:554px" width="14" height="13" viewBox="0 0 14 13"><path d="M0.5 0.5H13.5V12.5H0.5Z M0.5 8.5H9.5V0.5 M4.5 0.5V8.5" fill="none" stroke="#6d6d6d"/></svg>
<div class="a" style="left:786px;top:560px;width:6px;height:2px;background:#555"></div>
<div class="a" style="left:796px;top:560px;width:100px;height:1px;background:#a6a6a6"></div>
<div class="a" style="left:844px;top:555px;width:4px;height:11px;background:#666"></div>
<svg style="left:900px;top:557px" width="8" height="8" viewBox="0 0 8 8"><path d="M4 0V8M0 4H8" stroke="#555" stroke-width="1.8"/></svg>
<div class="a t" style="left:923.80px;top:556.23px;font-size:11.5px;letter-spacing:-1.200px;color:#444;">100</div>
<div class="a t" style="left:943.90px;top:556.23px;font-size:11.5px;letter-spacing:0.000px;color:#444;">%</div>
<div class="a t" style="left:59.80px;top:524.12px;font-size:19.5px;letter-spacing:-1.800px;color:#c00000;font-weight:bold;">(A)</div>
<div class="a" style="left:97px;top:520px;width:281px;height:37px;border:4px solid #c00000"></div>
<div class="a" style="left:0px;top:0px;width:1px;height:573px;background:#217346"></div>
<div class="a" style="left:973px;top:60px;width:1px;height:513px;background:#217346"></div>
<div class="a" style="left:0px;top:572px;width:974px;height:1px;background:#217346"></div>
</body></html>
